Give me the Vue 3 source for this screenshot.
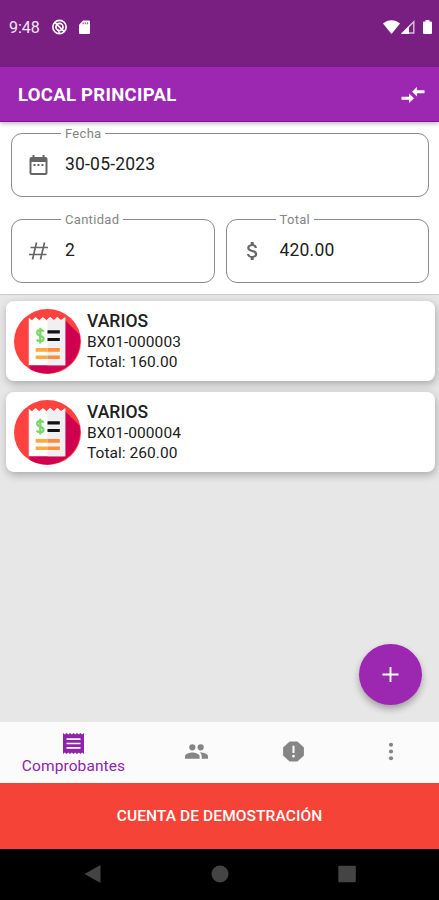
<template>
    <div class="screen">
        <div class="status-bar">
            <span class="clock">9:48</span>
            <svg class="status-round" viewBox="0 0 24 24">
                <circle cx="12" cy="12" r="10" fill="none" stroke="#fff" stroke-width="2.4" />
                <circle cx="12" cy="12" r="5.3" fill="none" stroke="#fff" stroke-width="2.6" />
                <path d="M5 5l14 14" stroke="#fff" stroke-width="2.4" />
                <path d="M9 15l3 6" stroke="#fff" stroke-width="2" />
            </svg>
            <svg class="status-sd" viewBox="0 0 12 15">
                <path d="M4.5 0.5H11a1 1 0 0 1 1 1V14a1 1 0 0 1-1 1H1a1 1 0 0 1-1-1V5z" fill="#fff" />
                <path d="M4.5 2.5v2M6.8 2.5v2M9.1 2.5v2" stroke="#7a1f82" stroke-width="1" />
            </svg>
            <span class="spacer"></span>
            <svg class="status-wifi" viewBox="0 0 17 14">
                <path d="M0 3.6C4.8-.9 12.2-.9 17 3.6L8.5 14z" fill="#fff" />
            </svg>
            <svg class="status-signal" viewBox="0 0 14 14">
                <path d="M12.8 1.8V13H1.6z" fill="none" stroke="#d9bfdd" stroke-width="1.4" />
                <path d="M0 14L8 6v8z" fill="#fff" />
            </svg>
            <svg class="status-battery" viewBox="0 0 9 14">
                <path d="M2.5 0h4v1.5H8a1 1 0 0 1 1 1V13a1 1 0 0 1-1 1H1a1 1 0 0 1-1-1V2.5a1 1 0 0 1 1-1h1.5z" fill="#fff" />
            </svg>
        </div>

        <header class="app-bar">
            <h1>LOCAL PRINCIPAL</h1>
            <svg class="swap" viewBox="0 0 24 16">
                <path d="M0.5 9.7H8V6.4L13 11.2 8 16v-3.3H0.5z" fill="#fff" />
                <path d="M23.5 6.3H16v3.3L11 4.8 16 0v3.3h7.5z" fill="#fff" />
            </svg>
        </header>

        <section class="summary">
            <div class="field">
                <label>Fecha</label>
                <svg class="field-icon" viewBox="0 0 24 24">
                    <path d="M7 11h2v2H7zm4 0h2v2h-2zm4 0h2v2h-2z" />
                    <path d="M19 4h-1V2h-2v2H8V2H6v2H5a2 2 0 0 0-2 2v14a2 2 0 0 0 2 2h14a2 2 0 0 0 2-2V6a2 2 0 0 0-2-2zm0 16H5V9h14z" />
                </svg>
                <span class="value">30-05-2023</span>
            </div>
            <div class="field-row">
                <div class="field">
                    <label>Cantidad</label>
                    <svg class="field-icon" viewBox="0 0 24 24">
                        <path d="M10 3.5L6 20.5M18 3.5L14 20.5M4 8.5H21.5M2.5 15.5H20" fill="none" stroke="#666" stroke-width="1.7" />
                    </svg>
                    <span class="value">2</span>
                </div>
                <div class="field">
                    <label>Total</label>
                    <svg class="field-icon" viewBox="0.8 0 24 24">
                        <path d="M11.8 10.9c-2.27-.59-3-1.2-3-2.15 0-1.09 1.01-1.85 2.7-1.85 1.78 0 2.44.85 2.5 2.1h2.21c-.07-1.72-1.12-3.3-3.21-3.81V3h-3v2.16c-1.94.42-3.5 1.68-3.5 3.61 0 2.31 1.91 3.46 4.7 4.13 2.5.6 3 1.48 3 2.41 0 .69-.49 1.79-2.7 1.79-2.06 0-2.87-.92-2.98-2.1h-2.2c.12 2.19 1.76 3.42 3.68 3.83V21h3v-2.15c1.95-.37 3.5-1.5 3.5-3.55 0-2.84-2.43-3.81-4.7-4.4z" />
                    </svg>
                    <span class="value">420.00</span>
                </div>
            </div>
        </section>

        <main class="list">
            <article v-for="item in items" :key="item.code" class="card">
                <svg class="receipt" viewBox="0 0 68 66" preserveAspectRatio="none">
                    <ellipse cx="34" cy="33" rx="34" ry="33" fill="#ff4240" />
                    <path d="M52 11.5L66.5 26A34 33 0 0 1 17 61.5L15 57z" fill="#d00050" />
                    <path d="M15 9l3.2 2.5L22 8l3.7 3.5L29.300 8l3.700 3.5L36.7 8l3.7 3.5L44 8l3.6 3.5L52 8.5V57H15z" fill="#fff" />
                    <path d="M34 10.5l2.7-2.5 3.7 3.5L44 8l3.6 3.5L52 8.500V57H34z" fill="#f0eff2" />
                    <path d="M30 23c-1-2-6.5-2.2-6.500 1.200 0 3.500 6.500 2.300 6.500 6 0 3.300-5.700 3-7 .8M26.700 19v16" fill="none" stroke="#77d866" stroke-width="2.3" />
                    <path d="M34 23.300h12.500M34 31h12.500" stroke="#111" stroke-width="3.2" />
                    <path d="M22 41.500h12M22 49h12" stroke="#ffa940" stroke-width="3.6" />
                    <path d="M34 41.500h12.500M34 49h12.500" stroke="#ff8c38" stroke-width="3.6" />
                </svg>
                <div class="info">
                    <strong>{{ item.name }}</strong>
                    <span>{{ item.code }}</span>
                    <span>Total: {{ item.total }}</span>
                </div>
            </article>
            <button class="fab">
                <svg viewBox="0 0 18 18"><path d="M9 1v16M0.5 9h17" stroke="#fff" stroke-width="2" /></svg>
            </button>
        </main>

        <nav class="tabs">
            <a class="tab active">
                <svg class="tab-receipt" viewBox="0 0 21 21">
                    <path d="M0 0l1.75 1.5L3.5 0l1.75 1.5L7 0l1.75 1.5L10.5 0l1.75 1.5L14 0l1.75 1.5L17.5 0l1.75 1.5L21 0v21l-1.75-1.5L17.5 21l-1.75-1.5L14 21l-1.75-1.5L10.5 21l-1.75-1.5L7 21l-1.75-1.5L3.5 21l-1.75-1.5L0 21z" fill="#8e24aa" />
                    <path d="M3.5 6.2h14M3.5 10.5h14M3.5 14.8h14" stroke="#fff" stroke-width="1.7" />
                </svg>
                <span>Comprobantes</span>
            </a>
            <a class="tab">
                <svg class="tab-icon people" viewBox="0 0 24 16">
                    <path d="M16 7a3 3 0 1 0 0-6 3 3 0 0 0 0 6zM8 7a3 3 0 1 0 0-6 3 3 0 0 0 0 6zM8 9c-2.33 0-7 1.17-7 3.5V15h14v-2.5C15 10.17 10.33 9 8 9zM16 9c-.29 0-.62.02-.97.05 1.16.84 1.97 1.97 1.97 3.45V15h6v-2.5C23 10.17 18.33 9 16 9z" />
                </svg>
            </a>
            <a class="tab">
                <svg class="tab-icon" viewBox="0 0 24 24">
                    <path d="M15.73 2.500H8.270L2 8.270v7.460L8.270 21.500h7.460L22 15.730V8.270zM12 17.800a1.300 1.300 0 1 1 0-2.600 1.300 1.300 0 0 1 0 2.600zM13 13.500h-2V6.500h2z" />
                </svg>
            </a>
            <a class="tab">
                <svg class="tab-icon" viewBox="0 0 24 24">
                    <circle cx="12.500" cy="5.500" r="2" /><circle cx="12.500" cy="12" r="2" /><circle cx="12.500" cy="18.500" r="2" />
                </svg>
            </a>
        </nav>

        <div class="demo-banner">CUENTA DE DEMOSTRACIÓN</div>

        <div class="system-nav">
            <svg viewBox="0 0 18 18"><path d="M0.5 9L16.5 0v18z" /></svg>
            <svg viewBox="0 0 18 18"><circle cx="9" cy="9" r="8.5" /></svg>
            <svg viewBox="0 0 18 18"><rect x="0.3" y="0.8" width="17.5" height="16.5" rx="1" /></svg>
        </div>
    </div>
</template>

<script setup>
import { ref } from 'vue';

const items = ref([
    { name: 'VARIOS', code: 'BX01-000003', total: '160.00' },
    { name: 'VARIOS', code: 'BX01-000004', total: '260.00' },
]);
</script>

<style>
body {
    margin: 0;
}
</style>

<style scoped>
.screen {
    display: flex;
    flex-direction: column;
    width: 439px;
    height: 900px;
    overflow: hidden;
    background: #e7e7e7;
    font-family: Roboto, "Liberation Sans", sans-serif;
    color: #212121;
}

svg {
    display: block;
    flex: none;
}

.status-bar {
    display: flex;
    align-items: center;
    box-sizing: border-box;
    height: 67px;
    padding: 0 7px 13px 9px;
    background: #7a1f82;
}

.clock {
    width: 42px;
    color: #f3e6f5;
    font-size: 16px;
    line-height: 20px;
    padding-top: 2px;
}

.status-round {
    width: 17px;
    height: 16px;
}

.status-sd {
    width: 11px;
    height: 14px;
    margin-left: 11px;
}

.spacer {
    flex: 1;
}

.status-wifi {
    width: 17px;
    height: 14px;
}

.status-signal {
    width: 14px;
    height: 14px;
    margin: 0 8px 0 1px;
}

.status-battery {
    width: 9px;
    height: 14px;
}

.app-bar {
    position: relative;
    z-index: 1;
    display: flex;
    align-items: center;
    justify-content: space-between;
    box-sizing: border-box;
    height: 55px;
    padding: 2px 14px 0 18px;
    background: #9c27b0;
    border-bottom: 1px solid #8b0ba4;
    box-shadow: 0 2px 4px rgba(0, 0, 0, 0.25);
}

.app-bar h1 {
    margin: 0;
    color: #fff;
    font-size: 18.5px;
    font-weight: 700;
    letter-spacing: 0.3px;
}

.swap {
    width: 24px;
    height: 16px;
}

.summary {
    display: flex;
    flex-direction: column;
    gap: 22px;
    box-sizing: border-box;
    height: 173px;
    padding: 11px 10px 0 11px;
    background: #fff;
    border-bottom: 1px solid #c9c9c9;
}

.field-row {
    display: flex;
    gap: 11px;
}

.field-row .field {
    flex: 1;
}

.field {
    position: relative;
    display: flex;
    align-items: center;
    box-sizing: border-box;
    height: 64px;
    padding: 0 14px;
    border: 1px solid #8a8a8a;
    border-radius: 11px;
}

.field label {
    position: absolute;
    top: -8px;
    left: 49px;
    padding: 0 4px;
    background: #fff;
    color: #858585;
    font-size: 13px;
    line-height: 16px;
    letter-spacing: 0.3px;
}

.field-icon {
    width: 25px;
    height: 24px;
    fill: #666;
}

.value {
    margin-left: 14px;
    margin-top: -2px;
    font-size: 17.5px;
    line-height: 22px;
    letter-spacing: 0.2px;
}

.list {
    position: relative;
    display: flex;
    flex: 1;
    flex-direction: column;
    gap: 11px;
    padding: 6px 4px 0 6px;
}

.card {
    display: flex;
    align-items: center;
    box-sizing: border-box;
    height: 80px;
    padding-left: 8px;
    background: #fff;
    border-radius: 8px;
    box-shadow: 1px 3px 8px rgba(0, 0, 0, 0.27);
}

.receipt {
    width: 67px;
    height: 65px;
}

.info {
    display: flex;
    flex-direction: column;
    margin-left: 6px;
    font-size: 15.5px;
    line-height: 20px;
    letter-spacing: 0.05px;
}

.info strong {
    font-size: 17.5px;
    font-weight: 500;
    line-height: 22px;
}

.fab {
    position: absolute;
    right: 17px;
    bottom: 17px;
    display: flex;
    align-items: center;
    justify-content: center;
    width: 63px;
    height: 61px;
    padding: 0;
    border: 0;
    border-radius: 50%;
    background: #9c27b0;
    box-shadow: 0 4px 7px rgba(0, 0, 0, 0.3);
}

.fab svg {
    width: 17px;
    height: 17px;
}

.tabs {
    display: grid;
    grid-template-columns: 147px 98px 97px 97px;
    height: 61px;
    background: #fbfbfb;
}

.tab {
    display: flex;
    flex-direction: column;
    align-items: center;
    justify-content: center;
    color: #8e24aa;
    font-size: 15.5px;
    line-height: 20px;
    letter-spacing: 0.1px;
}

.active {
    gap: 2px;
    padding-top: 4px;
}

.tab-receipt {
    width: 21px;
    height: 21px;
}

.tab-icon {
    width: 25px;
    height: 25px;
    margin-top: -3px;
    fill: #858585;
}

.people {
    height: 17px;
}

.demo-banner {
    display: flex;
    align-items: center;
    justify-content: center;
    height: 66px;
    background: #f54437;
    color: #fff;
    font-size: 15.5px;
    font-weight: 500;
    letter-spacing: 0.1px;
}

.system-nav {
    display: flex;
    align-items: center;
    justify-content: space-between;
    box-sizing: border-box;
    height: 51px;
    padding: 0 83px 1px 84px;
    background: #000;
}

.system-nav svg {
    width: 18px;
    height: 18px;
    fill: #444;
}
</style>
